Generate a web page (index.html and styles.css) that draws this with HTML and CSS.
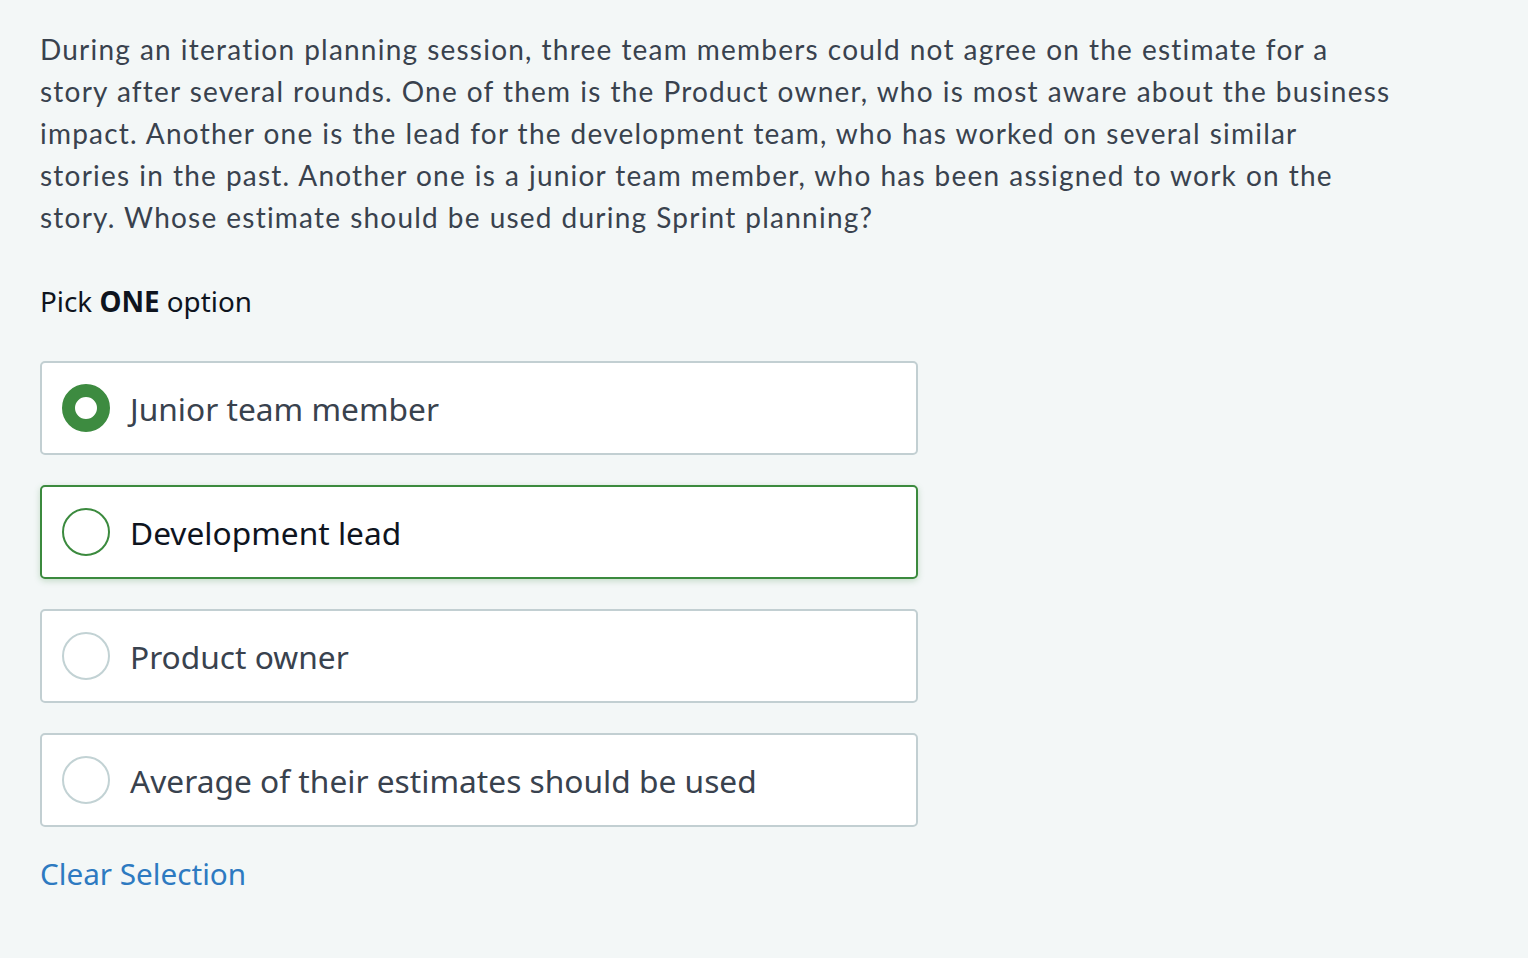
FILE: index.html
```html
<!DOCTYPE html>
<html>
<head>
<meta charset="utf-8">
<link rel="stylesheet" href="styles.css">
</head>
<body>
<div class="page">
  <p class="question">During an iteration planning session, three team members could not agree on the estimate for a<br>story after several rounds. One of them is the Product owner, who is most aware about the business<br>impact. Another one is the lead for the development team, who has worked on several similar<br>stories in the past. Another one is a junior team member, who has been assigned to work on the<br>story. Whose estimate should be used during Sprint planning?</p>
  <p class="pick">Pick <strong>ONE</strong> option</p>
  <div class="options">
    <div class="option"><span class="radio checked"></span><span class="label">Junior team member</span></div>
    <div class="option hover"><span class="radio green"></span><span class="label dark">Development lead</span></div>
    <div class="option"><span class="radio"></span><span class="label">Product owner</span></div>
    <div class="option"><span class="radio"></span><span class="label">Average of their estimates should be used</span></div>
  </div>
  <a class="clear" href="#">Clear Selection</a>
</div>
</body>
</html>
```
FILE: styles.css
```css
html, body { margin: 0; padding: 0; }
body { background: #f3f7f7; }
.page { padding: 28px 40px 40px 40px; }
.question {
  margin: 0;
  font-family: Lato, "Noto Sans", sans-serif;
  font-size: 28px;
  letter-spacing: 1.22px;
  word-spacing: 0.5px;
  line-height: 42px;
  color: #39424e;
  white-space: nowrap;
}
.pick {
  margin: 45px 0 0 0;
  font-family: "Noto Sans", sans-serif;
  font-size: 27.8px;
  line-height: 36px;
  color: #0e141e;
}
.pick strong { font-weight: 700; }
.options { margin-top: 42px; display: flex; flex-direction: column; gap: 30px; width: 878px; }
.option {
  box-sizing: border-box;
  height: 94px;
  background: #fff;
  border: 2px solid #c2cfd2;
  border-radius: 5px;
  display: flex;
  align-items: center;
  padding-left: 20px;
}
.option.hover { border-color: #3b8a3e; box-shadow: 0 2px 6px rgba(59,138,62,0.25); }
.radio {
  box-sizing: border-box;
  width: 48px; height: 48px;
  border-radius: 50%;
  border: 2px solid #c2d2d4;
  flex: none;
}
.radio.green { border-color: #3b8a3e; }
.radio.checked { border: 13px solid #3d8b40; }
.label {
  margin-left: 20px;
  font-family: "Noto Sans", sans-serif;
  font-size: 31.7px;
  color: #39424e;
}
.label.dark { color: #0e141e; }
.clear {
  display: inline-block;
  margin-top: 26px;
  font-family: "Noto Sans", sans-serif;
  font-size: 29.7px;
  color: #2d7ac1;
  text-decoration: none;
}
```
